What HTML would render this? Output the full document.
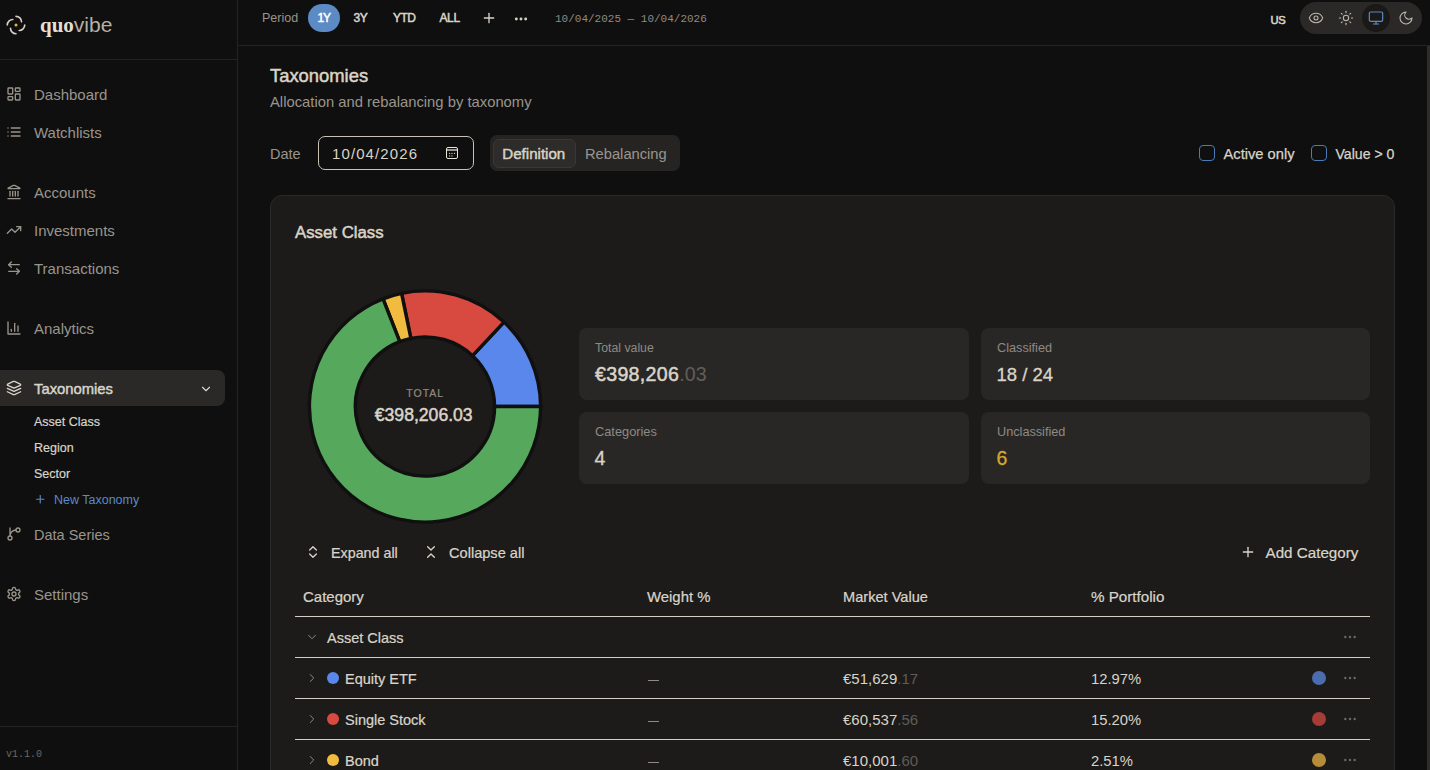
<!DOCTYPE html>
<html><head><meta charset="utf-8"><title>quovibe - Taxonomies</title>
<style>
html,body{margin:0;padding:0;}
body{width:1430px;height:770px;overflow:hidden;position:relative;background:#0f0f0f;font-family:"Liberation Sans", sans-serif;}
.t{position:absolute;white-space:nowrap;}
.r{position:absolute;}
.i{position:absolute;overflow:visible;}
</style></head><body>
<div class="r" style="left:237px;top:0px;width:1px;height:770px;background:#252321;"></div>
<div class="r" style="left:0px;top:59px;width:237px;height:1px;background:#252321;"></div>
<div class="r" style="left:0px;top:726px;width:237px;height:1px;background:#252321;"></div>
<div class="r" style="left:238px;top:45px;width:1192px;height:1px;background:#252321;"></div>
<div class="r" style="left:1427px;top:46px;width:3px;height:724px;background:#2e2d2c;"></div>
<svg class="i" style="left:5.9px;top:14.8px;" width="20" height="20" viewBox="0 0 20 20" fill="none" stroke="#d6d0c4" stroke-width="1.65" stroke-linecap="round" stroke-linejoin="round"><path d="M10,1.3 A5.5,5.5 0 0 1 15.5,6.8"/><path d="M18.7,10 A5.5,5.5 0 0 1 13.2,15.5"/><path d="M10,18.7 A5.5,5.5 0 0 1 4.5,13.2"/><path d="M1.3,10 A5.5,5.5 0 0 1 6.8,4.5"/><circle cx="10" cy="10" r="1.5" fill="#e3b53a" stroke="none"/></svg>
<div class="t" style="left:40px;top:14px;font-size:21px;line-height:21px;"><b style="font-family:'Liberation Serif',serif;font-weight:700;color:#e4dfd3">quo</b><span style="color:#b5b0a6">vibe</span></div>
<div class="t" style="left:34px;top:87px;font-size:15px;line-height:15px;color:#9a958c;">Dashboard</div>
<div class="t" style="left:34px;top:125px;font-size:15px;line-height:15px;color:#9a958c;">Watchlists</div>
<div class="t" style="left:34px;top:185px;font-size:15px;line-height:15px;color:#9a958c;">Accounts</div>
<div class="t" style="left:34px;top:223px;font-size:15px;line-height:15px;color:#9a958c;">Investments</div>
<div class="t" style="left:34px;top:261px;font-size:15px;line-height:15px;color:#9a958c;">Transactions</div>
<div class="t" style="left:34px;top:321px;font-size:15px;line-height:15px;color:#9a958c;">Analytics</div>
<div class="r" style="left:-8px;top:370px;width:233px;height:36px;background:#2a2928;border-radius:8px;"></div>
<div class="t" style="left:34px;top:382px;font-size:14.8px;line-height:14.8px;color:#d9d4c8;-webkit-text-stroke:0.45px #d9d4c8;">Taxonomies</div>
<div class="t" style="left:34px;top:416px;font-size:12.5px;line-height:12.5px;color:#d9d4c8;-webkit-text-stroke:0.2px #d9d4c8;">Asset Class</div>
<div class="t" style="left:34px;top:442px;font-size:12.5px;line-height:12.5px;color:#d9d4c8;-webkit-text-stroke:0.2px #d9d4c8;">Region</div>
<div class="t" style="left:34px;top:468px;font-size:12.5px;line-height:12.5px;color:#d9d4c8;-webkit-text-stroke:0.2px #d9d4c8;">Sector</div>
<div class="t" style="left:54px;top:494px;font-size:12.5px;line-height:12.5px;color:#5b8ac4;">New Taxonomy</div>
<div class="t" style="left:34px;top:528px;font-size:14.5px;line-height:14.5px;color:#9a958c;">Data Series</div>
<div class="t" style="left:34px;top:587px;font-size:15px;line-height:15px;color:#9a958c;">Settings</div>
<div class="t" style="left:6px;top:750px;font-size:10px;line-height:10px;color:#6b6761;font-family:'Liberation Mono', monospace;">v1.1.0</div>
<svg class="i" style="left:6px;top:86px;" width="16" height="16" viewBox="0 0 24 24" fill="none" stroke="#9a958c" stroke-width="2" stroke-linecap="round" stroke-linejoin="round"><rect width="7" height="9" x="3" y="3" rx="1"/><rect width="7" height="5" x="14" y="3" rx="1"/><rect width="7" height="9" x="14" y="12" rx="1"/><rect width="7" height="5" x="3" y="16" rx="1"/></svg>
<svg class="i" style="left:6px;top:124px;" width="16" height="16" viewBox="0 0 24 24" fill="none" stroke="#9a958c" stroke-width="2" stroke-linecap="round" stroke-linejoin="round"><path d="M3 12h.01"/><path d="M3 18h.01"/><path d="M3 6h.01"/><path d="M8 12h13"/><path d="M8 18h13"/><path d="M8 6h13"/></svg>
<svg class="i" style="left:6px;top:184px;" width="16" height="16" viewBox="0 0 24 24" fill="none" stroke="#9a958c" stroke-width="2" stroke-linecap="round" stroke-linejoin="round"><path d="M10 18v-7"/><path d="M11.12 2.198a2 2 0 0 1 1.76.006l7.866 3.847c.476.233.31.949-.22.949H3.474c-.53 0-.695-.716-.22-.949z"/><path d="M14 18v-7"/><path d="M18 18v-7"/><path d="M3 22h18"/><path d="M6 18v-7"/></svg>
<svg class="i" style="left:6px;top:222px;" width="16" height="16" viewBox="0 0 24 24" fill="none" stroke="#9a958c" stroke-width="2" stroke-linecap="round" stroke-linejoin="round"><polyline points="22 7 13.5 15.5 8.5 10.5 2 17"/><polyline points="16 7 22 7 22 13"/></svg>
<svg class="i" style="left:6px;top:260px;" width="16" height="16" viewBox="0 0 24 24" fill="none" stroke="#9a958c" stroke-width="2" stroke-linecap="round" stroke-linejoin="round"><path d="M8 3 4 7l4 4"/><path d="M4 7h16"/><path d="m16 21 4-4-4-4"/><path d="M20 17H4"/></svg>
<svg class="i" style="left:6px;top:320px;" width="16" height="16" viewBox="0 0 24 24" fill="none" stroke="#9a958c" stroke-width="2" stroke-linecap="round" stroke-linejoin="round"><path d="M3 3v18h18"/><path d="M18 17V9"/><path d="M13 17V5"/><path d="M8 17v-3"/></svg>
<svg class="i" style="left:6px;top:380px;" width="16" height="16" viewBox="0 0 24 24" fill="none" stroke="#d9d4c8" stroke-width="2" stroke-linecap="round" stroke-linejoin="round"><path d="m12.83 2.18a2 2 0 0 0-1.66 0L2.6 6.08a1 1 0 0 0 0 1.830l8.58 3.91a2 2 0 0 0 1.66 0l8.58-3.9a1 1 0 0 0 0-1.83Z"/><path d="m22 17.65-9.17 4.16a2 2 0 0 1-1.66 0L2 17.65"/><path d="m22 12.65-9.17 4.16a2 2 0 0 1-1.66 0L2 12.65"/></svg>
<svg class="i" style="left:198.5px;top:381.5px;" width="14" height="14" viewBox="0 0 24 24" fill="none" stroke="#d9d4c8" stroke-width="2" stroke-linecap="round" stroke-linejoin="round"><path d="m6 9 6 6 6-6"/></svg>
<svg class="i" style="left:33.5px;top:492.5px;" width="12.5" height="12.5" viewBox="0 0 24 24" fill="none" stroke="#5b8ac4" stroke-width="2.2" stroke-linecap="round" stroke-linejoin="round"><path d="M5 12h14"/><path d="M12 5v14"/></svg>
<svg class="i" style="left:6px;top:526px;" width="16" height="16" viewBox="0 0 24 24" fill="none" stroke="#9a958c" stroke-width="2" stroke-linecap="round" stroke-linejoin="round"><path d="M15 6a9 9 0 0 0-9 9V3"/><circle cx="18" cy="6" r="3"/><circle cx="6" cy="18" r="3"/></svg>
<svg class="i" style="left:6px;top:586px;" width="16" height="16" viewBox="0 0 24 24" fill="none" stroke="#9a958c" stroke-width="2" stroke-linecap="round" stroke-linejoin="round"><path d="M12.22 2h-.44a2 2 0 0 0-2 2v.18a2 2 0 0 1-1 1.73l-.43.25a2 2 0 0 1-2 0l-.15-.08a2 2 0 0 0-2.73.73l-.22.38a2 2 0 0 0 .73 2.73l.15.1a2 2 0 0 1 1 1.72v.51a2 2 0 0 1-1 1.740l-.15.09a2 2 0 0 0-.73 2.73l.22.38a2 2 0 0 0 2.73.73l.15-.08a2 2 0 0 1 2 0l.43.25a2 2 0 0 1 1 1.73V20a2 2 0 0 0 2 2h.44a2 2 0 0 0 2-2v-.18a2 2 0 0 1 1-1.73l.43-.25a2 2 0 0 1 2 0l.15.08a2 2 0 0 0 2.73-.73l.22-.39a2 2 0 0 0-.73-2.73l-.15-.08a2 2 0 0 1-1-1.74v-.5a2 2 0 0 1 1-1.74l.15-.09a2 2 0 0 0 .73-2.73l-.22-.38a2 2 0 0 0-2.73-.73l-.15.08a2 2 0 0 1-2 0l-.43-.25a2 2 0 0 1-1-1.73V4a2 2 0 0 0-2-2z"/><circle cx="12" cy="12" r="3"/></svg>
<div class="t" style="left:262px;top:12px;font-size:12.5px;line-height:12.5px;color:#9a958c;">Period</div>
<div class="r" style="left:308px;top:4px;width:32px;height:28px;background:#5b8ac4;border-radius:14px;"></div>
<div class="t" style="left:317.5px;top:12px;font-size:12px;line-height:12px;color:#ffffff;letter-spacing:-1.2px;-webkit-text-stroke:0.5px #ffffff;">1Y</div>
<div class="t" style="left:353.5px;top:12px;font-size:12px;line-height:12px;color:#d9d4c8;letter-spacing:-0.4px;-webkit-text-stroke:0.5px #d9d4c8;">3Y</div>
<div class="t" style="left:393px;top:12px;font-size:12px;line-height:12px;color:#d9d4c8;letter-spacing:-0.6px;-webkit-text-stroke:0.5px #d9d4c8;">YTD</div>
<div class="t" style="left:439.5px;top:12px;font-size:12px;line-height:12px;color:#d9d4c8;letter-spacing:-0.4px;-webkit-text-stroke:0.5px #d9d4c8;">ALL</div>
<svg class="i" style="left:480.8px;top:10px;" width="16" height="16" viewBox="0 0 24 24" fill="none" stroke="#d9d4c8" stroke-width="2" stroke-linecap="round" stroke-linejoin="round"><path d="M5 12h14"/><path d="M12 5v14"/></svg>
<svg class="i" style="left:512.5px;top:10.5px;" width="16" height="16" viewBox="0 0 24 24" fill="none" stroke="#d9d4c8" stroke-width="2.4" stroke-linecap="round" stroke-linejoin="round"><circle cx="12" cy="12" r="1"/><circle cx="19" cy="12" r="1"/><circle cx="5" cy="12" r="1"/></svg>
<div class="t" style="left:555px;top:14px;font-size:11px;line-height:11px;color:#8f8a82;font-family:'Liberation Mono', monospace;">10/04/2025 — 10/04/2026</div>
<div class="t" style="left:1270.5px;top:15px;font-size:11.2px;line-height:11.2px;color:#d9d4c8;letter-spacing:-0.3px;-webkit-text-stroke:0.55px #d9d4c8;">US</div>
<div class="r" style="left:1300px;top:2px;width:122px;height:32px;background:#2a2928;border-radius:16px;"></div>
<div class="r" style="left:1362px;top:4px;width:28px;height:28px;background:#1a1918;border-radius:14px;"></div>
<svg class="i" style="left:1308px;top:10px;" width="16" height="16" viewBox="0 0 24 24" fill="none" stroke="#bdb8ad" stroke-width="1.6" stroke-linecap="round" stroke-linejoin="round"><path d="M2.062 12.348a1 1 0 0 1 0-.696 10.75 10.75 0 0 1 19.876 0 1 1 0 0 1 0 .696 10.75 10.75 0 0 1-19.876 0"/><circle cx="12" cy="12" r="3"/></svg>
<svg class="i" style="left:1338px;top:10px;" width="16" height="16" viewBox="0 0 24 24" fill="none" stroke="#bdb8ad" stroke-width="1.6" stroke-linecap="round" stroke-linejoin="round"><circle cx="12" cy="12" r="4"/><path d="M12 2v2"/><path d="M12 20v2"/><path d="m4.93 4.93 1.41 1.41"/><path d="m17.66 17.66 1.41 1.41"/><path d="M2 12h2"/><path d="M20 12h2"/><path d="m6.34 17.66-1.41 1.41"/><path d="m19.07 4.93-1.41 1.41"/></svg>
<svg class="i" style="left:1368px;top:10px;" width="16" height="16" viewBox="0 0 24 24" fill="none" stroke="#5b8ac4" stroke-width="1.8" stroke-linecap="round" stroke-linejoin="round"><rect width="20" height="14" x="2" y="3" rx="2"/><line x1="8" x2="16" y1="21" y2="21"/><line x1="12" x2="12" y1="17" y2="21"/></svg>
<svg class="i" style="left:1398px;top:10px;" width="16" height="16" viewBox="0 0 24 24" fill="none" stroke="#bdb8ad" stroke-width="1.6" stroke-linecap="round" stroke-linejoin="round"><path d="M12 3a6 6 0 0 0 9 9 9 9 0 1 1-9-9Z"/></svg>
<div class="t" style="left:270px;top:67px;font-size:18.4px;line-height:18.4px;color:#d9d4c8;-webkit-text-stroke:0.5px #d9d4c8;">Taxonomies</div>
<div class="t" style="left:270px;top:95px;font-size:14.8px;line-height:14.8px;color:#9a958c;">Allocation and rebalancing by taxonomy</div>
<div class="t" style="left:270px;top:147px;font-size:14.5px;line-height:14.5px;color:#9a958c;">Date</div>
<div class="r" style="left:318px;top:136px;width:156px;height:34px;background:#0f0f0f;border:1px solid #c9c3b6;box-sizing:border-box;border-radius:7px;"></div>
<div class="t" style="left:332px;top:146px;font-size:15px;line-height:15px;color:#d9d4c8;letter-spacing:1.1px;">10/04/2026</div>
<div class="r" style="left:446px;top:147px;width:12px;height:12px;border:1.6px solid #e8e4da;box-sizing:border-box;border-radius:2px;"></div>
<div class="r" style="left:447px;top:149px;width:10px;height:2.2px;background:#9a968f;"></div>
<svg class="i" style="left:446px;top:147px;fill:#d0ccc3;" width="12" height="12" viewBox="0 0 12 12" fill="none" stroke="none" stroke-width="0" stroke-linecap="round" stroke-linejoin="round"><circle cx="3.6" cy="6.4" r="0.65"/><circle cx="6" cy="6.4" r="0.65"/><circle cx="8.5" cy="6.4" r="0.65"/><circle cx="3.6" cy="8.9" r="0.65"/><circle cx="6" cy="8.9" r="0.65"/></svg>
<div class="r" style="left:490px;top:135px;width:190px;height:36px;background:#252423;border-radius:7px;"></div>
<div class="r" style="left:493px;top:139px;width:83px;height:29px;background:#2d2c2a;border:1px solid #3a3836;box-sizing:border-box;border-radius:6px;"></div>
<div class="t" style="left:502.3px;top:146px;font-size:15.1px;line-height:15.1px;color:#d9d4c8;-webkit-text-stroke:0.45px #d9d4c8;">Definition</div>
<div class="t" style="left:585px;top:147px;font-size:14.7px;line-height:14.7px;color:#9a958c;">Rebalancing</div>
<div class="r" style="left:1199px;top:145px;width:16px;height:16px;border:1.2px solid #4a7ab8;box-sizing:border-box;border-radius:4px;"></div>
<div class="t" style="left:1223.5px;top:147px;font-size:14.7px;line-height:14.7px;color:#d9d4c8;-webkit-text-stroke:0.25px #d9d4c8;">Active only</div>
<div class="r" style="left:1311px;top:145px;width:16px;height:16px;border:1.2px solid #4a7ab8;box-sizing:border-box;border-radius:4px;"></div>
<div class="t" style="left:1335.5px;top:147px;font-size:14.1px;line-height:14.1px;color:#d9d4c8;-webkit-text-stroke:0.25px #d9d4c8;">Value &gt; 0</div>
<div class="r" style="left:270px;top:195px;width:1125px;height:700px;background:#1c1b1a;border:1px solid #2b2927;box-sizing:border-box;border-radius:12px;"></div>
<div class="t" style="left:295px;top:225px;font-size:16.8px;line-height:16.8px;color:#d9d4c8;-webkit-text-stroke:0.5px #d9d4c8;">Asset Class</div>
<svg class="i" style="left:0;top:0" width="1430" height="770"><path d="M540.60,406.50 A115.6,115.6 0 0 0 503.99,322.09 L472.56,355.68 A69.6,69.6 0 0 1 494.60,406.50 Z" fill="#5a87ec" stroke="#111010" stroke-width="3.4" stroke-linejoin="miter"/><path d="M503.99,322.09 A115.6,115.6 0 0 0 401.56,293.30 L410.89,338.35 A69.6,69.6 0 0 1 472.56,355.68 Z" fill="#d84a40" stroke="#111010" stroke-width="3.4" stroke-linejoin="miter"/><path d="M401.56,293.30 A115.6,115.6 0 0 0 383.01,298.80 L399.72,341.65 A69.6,69.6 0 0 1 410.89,338.35 Z" fill="#f0bb3f" stroke="#111010" stroke-width="3.4" stroke-linejoin="miter"/><path d="M383.01,298.80 A115.6,115.6 0 1 0 540.60,406.50 L494.60,406.50 A69.6,69.6 0 1 1 399.72,341.65 Z" fill="#56a85c" stroke="#111010" stroke-width="3.4" stroke-linejoin="miter"/></svg>
<div class="t" style="left:406.3px;top:388px;font-size:10.5px;line-height:10.5px;color:#8f8a82;letter-spacing:1.0px;-webkit-text-stroke:0.2px #8f8a82;">TOTAL</div>
<div class="t" style="left:374.8px;top:407px;font-size:17.6px;line-height:17.6px;color:#d9d4c8;-webkit-text-stroke:0.5px #d9d4c8;">€398,206.03</div>
<div class="r" style="left:579px;top:328px;width:390px;height:72px;background:#282726;border-radius:8px;"></div>
<div class="r" style="left:981px;top:328px;width:389px;height:72px;background:#282726;border-radius:8px;"></div>
<div class="r" style="left:579px;top:412px;width:390px;height:72px;background:#282726;border-radius:8px;"></div>
<div class="r" style="left:981px;top:412px;width:389px;height:72px;background:#282726;border-radius:8px;"></div>
<div class="t" style="left:595px;top:342px;font-size:12.3px;line-height:12.3px;color:#8f8a82;">Total value</div>
<div class="t" style="left:595px;top:365px;font-size:19.6px;line-height:19.6px;color:#d9d4c8;letter-spacing:0.3px;-webkit-text-stroke:0.5px #d9d4c8;">€398,206<span style="color:#625e59;-webkit-text-stroke:0;letter-spacing:0.2px">.03</span></div>
<div class="t" style="left:997px;top:342px;font-size:12.7px;line-height:12.7px;color:#8f8a82;">Classified</div>
<div class="t" style="left:996.5px;top:366px;font-size:18.5px;line-height:18.5px;color:#d9d4c8;-webkit-text-stroke:0.3px #d9d4c8;">18 / 24</div>
<div class="t" style="left:595px;top:426px;font-size:12.8px;line-height:12.8px;color:#8f8a82;">Categories</div>
<div class="t" style="left:594.5px;top:449px;font-size:19.5px;line-height:19.5px;color:#d9d4c8;-webkit-text-stroke:0.3px #d9d4c8;">4</div>
<div class="t" style="left:997px;top:426px;font-size:12.7px;line-height:12.7px;color:#8f8a82;">Unclassified</div>
<div class="t" style="left:996.5px;top:449px;font-size:19.5px;line-height:19.5px;color:#d4a92e;-webkit-text-stroke:0.3px #d4a92e;">6</div>
<svg class="i" style="left:304.9px;top:543.8px;" width="16" height="16" viewBox="0 0 24 24" fill="none" stroke="#d9d4c8" stroke-width="2" stroke-linecap="round" stroke-linejoin="round"><path d="m7 15 5 5 5-5"/><path d="m7 9 5-5 5 5"/></svg>
<div class="t" style="left:331px;top:546px;font-size:14.3px;line-height:14.3px;color:#d9d4c8;-webkit-text-stroke:0.22px #d9d4c8;">Expand all</div>
<svg class="i" style="left:422.7px;top:543.7px;" width="16" height="16" viewBox="0 0 24 24" fill="none" stroke="#d9d4c8" stroke-width="2" stroke-linecap="round" stroke-linejoin="round"><path d="m7 20 5-5 5 5"/><path d="m7 4 5 5 5-5"/></svg>
<div class="t" style="left:449px;top:546px;font-size:14.6px;line-height:14.6px;color:#d9d4c8;-webkit-text-stroke:0.22px #d9d4c8;">Collapse all</div>
<svg class="i" style="left:1240px;top:544px;" width="16" height="16" viewBox="0 0 24 24" fill="none" stroke="#d9d4c8" stroke-width="2" stroke-linecap="round" stroke-linejoin="round"><path d="M5 12h14"/><path d="M12 5v14"/></svg>
<div class="t" style="left:1265.5px;top:545px;font-size:15.2px;line-height:15.2px;color:#d9d4c8;-webkit-text-stroke:0.22px #d9d4c8;">Add Category</div>
<div class="t" style="left:303px;top:589px;font-size:15px;line-height:15px;color:#d9d4c8;-webkit-text-stroke:0.22px #d9d4c8;">Category</div>
<div class="t" style="left:647px;top:590px;font-size:14.9px;line-height:14.9px;color:#d9d4c8;-webkit-text-stroke:0.22px #d9d4c8;">Weight %</div>
<div class="t" style="left:843px;top:590px;font-size:14.6px;line-height:14.6px;color:#d9d4c8;-webkit-text-stroke:0.22px #d9d4c8;">Market Value</div>
<div class="t" style="left:1091px;top:589px;font-size:15.2px;line-height:15.2px;color:#d9d4c8;-webkit-text-stroke:0.22px #d9d4c8;">% Portfolio</div>
<div class="r" style="left:295px;top:616px;width:1075px;height:1.2px;background:#d6d0c4;"></div>
<div class="r" style="left:295px;top:657px;width:1075px;height:1px;background:#d6d0c4;"></div>
<div class="r" style="left:295px;top:698px;width:1075px;height:1px;background:#d6d0c4;"></div>
<div class="r" style="left:295px;top:739px;width:1075px;height:1px;background:#d6d0c4;"></div>
<svg class="i" style="left:305px;top:630px;" width="14" height="14" viewBox="0 0 24 24" fill="none" stroke="#8f8a82" stroke-width="1.7" stroke-linecap="round" stroke-linejoin="round"><path d="m6 9 6 6 6-6"/></svg>
<div class="t" style="left:327px;top:631px;font-size:14.5px;line-height:14.5px;color:#d9d4c8;-webkit-text-stroke:0.22px #d9d4c8;">Asset Class</div>
<svg class="i" style="left:1342px;top:629px;" width="16" height="16" viewBox="0 0 24 24" fill="none" stroke="#6f6b65" stroke-width="1.6" stroke-linecap="round" stroke-linejoin="round"><circle cx="12" cy="12" r="1"/><circle cx="19" cy="12" r="1"/><circle cx="5" cy="12" r="1"/></svg>
<svg class="i" style="left:304.8px;top:671.2px;" width="14" height="14" viewBox="0 0 24 24" fill="none" stroke="#8f8a82" stroke-width="1.7" stroke-linecap="round" stroke-linejoin="round"><path d="m9 18 6-6-6-6"/></svg>
<div class="r" style="left:327px;top:672px;width:12px;height:12px;background:#5a87ec;border-radius:6px;"></div>
<div class="t" style="left:345px;top:672px;font-size:14.5px;line-height:14.5px;color:#d9d4c8;-webkit-text-stroke:0.22px #d9d4c8;">Equity ETF</div>
<div class="r" style="left:648px;top:679.5px;width:11px;height:1px;background:#8f8a82;"></div>
<div class="t" style="left:843px;top:671px;font-size:15px;line-height:15px;color:#d9d4c8;">€51,629<span style="color:#5f5b56">.17</span></div>
<div class="t" style="left:1091px;top:672px;font-size:14.8px;line-height:14.8px;color:#d9d4c8;">12.97%</div>
<div class="r" style="left:1312px;top:671px;width:14px;height:14px;background:#4b6db0;border-radius:7px;"></div>
<svg class="i" style="left:1342px;top:670px;" width="16" height="16" viewBox="0 0 24 24" fill="none" stroke="#6f6b65" stroke-width="1.6" stroke-linecap="round" stroke-linejoin="round"><circle cx="12" cy="12" r="1"/><circle cx="19" cy="12" r="1"/><circle cx="5" cy="12" r="1"/></svg>
<svg class="i" style="left:304.8px;top:712.2px;" width="14" height="14" viewBox="0 0 24 24" fill="none" stroke="#8f8a82" stroke-width="1.7" stroke-linecap="round" stroke-linejoin="round"><path d="m9 18 6-6-6-6"/></svg>
<div class="r" style="left:327px;top:713px;width:12px;height:12px;background:#d84a40;border-radius:6px;"></div>
<div class="t" style="left:345px;top:713px;font-size:14.5px;line-height:14.5px;color:#d9d4c8;-webkit-text-stroke:0.22px #d9d4c8;">Single Stock</div>
<div class="r" style="left:648px;top:720.5px;width:11px;height:1px;background:#8f8a82;"></div>
<div class="t" style="left:843px;top:712px;font-size:15px;line-height:15px;color:#d9d4c8;">€60,537<span style="color:#5f5b56">.56</span></div>
<div class="t" style="left:1091px;top:713px;font-size:14.8px;line-height:14.8px;color:#d9d4c8;">15.20%</div>
<div class="r" style="left:1312px;top:712px;width:14px;height:14px;background:#a63c36;border-radius:7px;"></div>
<svg class="i" style="left:1342px;top:711px;" width="16" height="16" viewBox="0 0 24 24" fill="none" stroke="#6f6b65" stroke-width="1.6" stroke-linecap="round" stroke-linejoin="round"><circle cx="12" cy="12" r="1"/><circle cx="19" cy="12" r="1"/><circle cx="5" cy="12" r="1"/></svg>
<svg class="i" style="left:304.8px;top:753.2px;" width="14" height="14" viewBox="0 0 24 24" fill="none" stroke="#8f8a82" stroke-width="1.7" stroke-linecap="round" stroke-linejoin="round"><path d="m9 18 6-6-6-6"/></svg>
<div class="r" style="left:327px;top:754px;width:12px;height:12px;background:#f0bb3f;border-radius:6px;"></div>
<div class="t" style="left:345px;top:754px;font-size:14.5px;line-height:14.5px;color:#d9d4c8;-webkit-text-stroke:0.22px #d9d4c8;">Bond</div>
<div class="r" style="left:648px;top:761.5px;width:11px;height:1px;background:#8f8a82;"></div>
<div class="t" style="left:843px;top:753px;font-size:15px;line-height:15px;color:#d9d4c8;">€10,001<span style="color:#5f5b56">.60</span></div>
<div class="t" style="left:1091px;top:754px;font-size:14.8px;line-height:14.8px;color:#d9d4c8;">2.51%</div>
<div class="r" style="left:1312px;top:753px;width:14px;height:14px;background:#b58c38;border-radius:7px;"></div>
<svg class="i" style="left:1342px;top:752px;" width="16" height="16" viewBox="0 0 24 24" fill="none" stroke="#6f6b65" stroke-width="1.6" stroke-linecap="round" stroke-linejoin="round"><circle cx="12" cy="12" r="1"/><circle cx="19" cy="12" r="1"/><circle cx="5" cy="12" r="1"/></svg>
</body></html>
